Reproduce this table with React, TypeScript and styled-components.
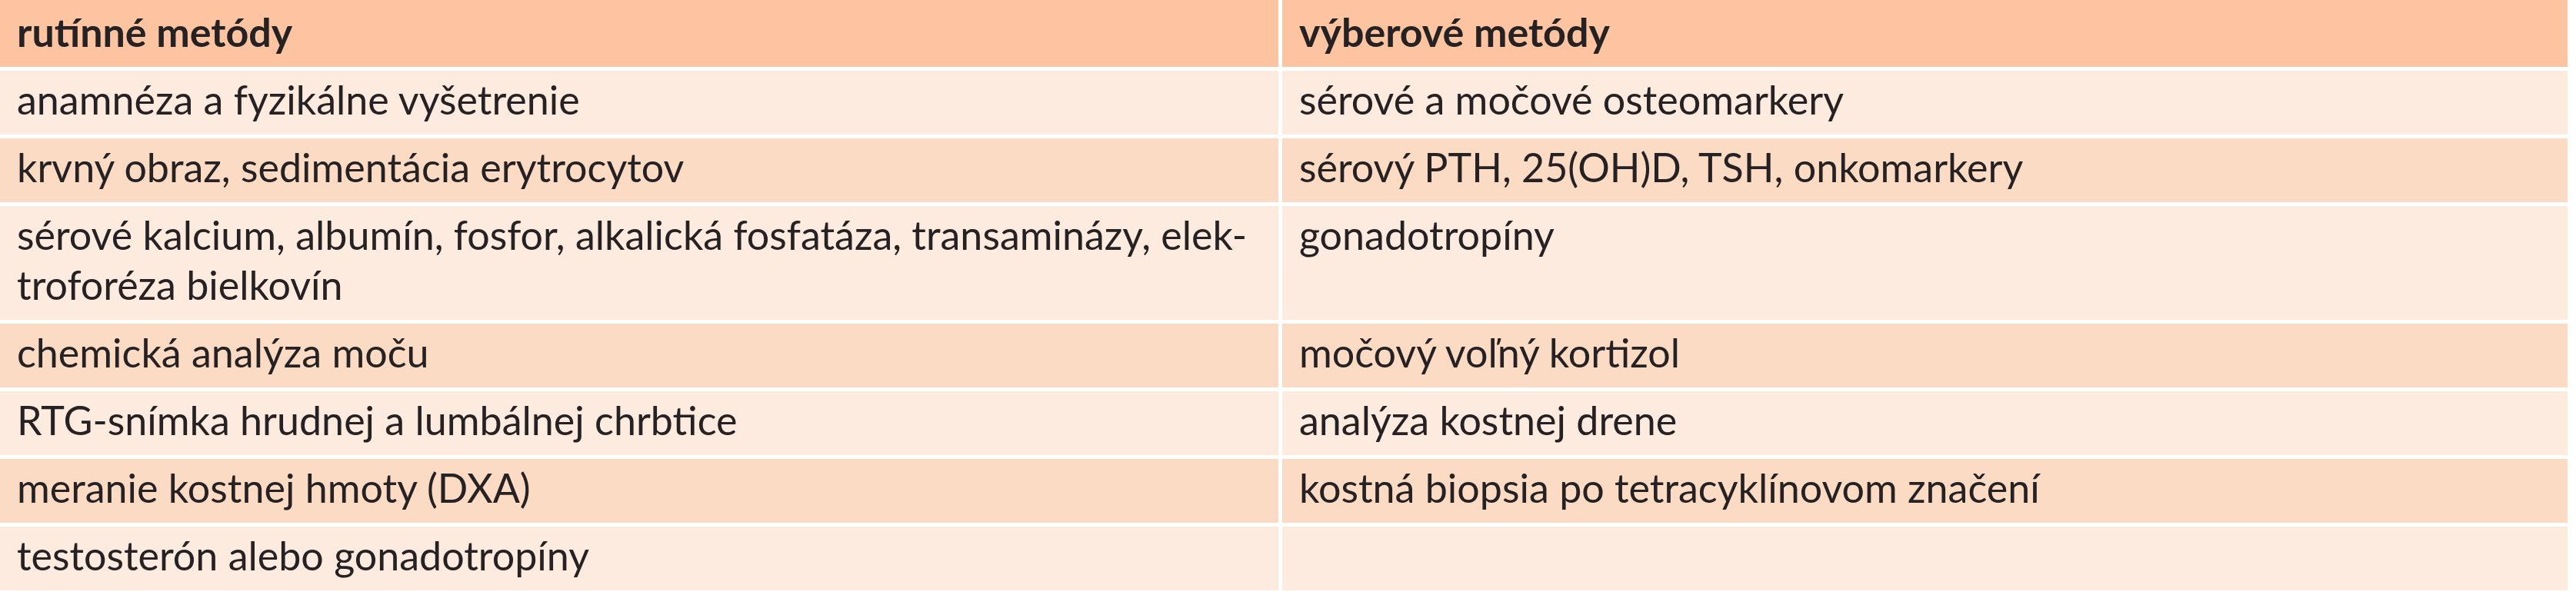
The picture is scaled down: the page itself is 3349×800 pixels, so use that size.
import { Fragment, ReactNode } from "react";
import styled, { createGlobalStyle } from "styled-components";

const GlobalStyle = createGlobalStyle`
  html, body {
    margin: 0;
    padding: 0;
    background: #ffffff;
  }
`;

const Table = styled.div`
  width: 3338px;
  display: grid;
  grid-template-columns: 1662px 1fr;
  column-gap: 5px;
  row-gap: 5px;
  font-family: Lato, "Liberation Sans", sans-serif;
  font-size: 52px;
  line-height: 65px;
  color: #262122;
`;

type Tone = "head" | "light" | "mid";

interface CellProps {
  tone: Tone;
}

const toneColor: Record<Tone, string> = {
  head: "#fcc4a1",
  light: "#fdebdf",
  mid: "#fcdbc5",
};

const Cell = styled.div<CellProps>`
  background: ${(props) => toneColor[props.tone]};
  padding: ${(props) =>
    props.tone === "head" ? "9px 22px 13px" : "5px 22px 13px"};
  font-weight: ${(props) => (props.tone === "head" ? 700 : 400)};
  min-height: 65px;
  white-space: nowrap;
`;

const rows: [ReactNode, string][] = [
  ["anamnéza a fyzikálne vyšetrenie", "sérové a močové osteomarkery"],
  ["krvný obraz, sedimentácia erytrocytov", "sérový PTH, 25(OH)D, TSH, onkomarkery"],
  [
    <>
      sérové kalcium, albumín, fosfor, alkalická fosfatáza, transaminázy, elek-
      <br />
      troforéza bielkovín
    </>,
    "gonadotropíny",
  ],
  ["chemická analýza moču", "močový voľný kortizol"],
  ["RTG-snímka hrudnej a lumbálnej chrbtice", "analýza kostnej drene"],
  ["meranie kostnej hmoty (DXA)", "kostná biopsia po tetracyklínovom značení"],
  ["testosterón alebo gonadotropíny", ""],
];

const App = () => {
  return (
    <>
      <GlobalStyle />
      <Table>
        <Cell tone="head">rutínné metódy</Cell>
        <Cell tone="head">výberové metódy</Cell>
        {rows.map(([left, right], index) => {
          const tone: Tone = index % 2 === 0 ? "light" : "mid";
          return (
            <Fragment key={index}>
              <Cell tone={tone}>{left}</Cell>
              <Cell tone={tone}>{right}</Cell>
            </Fragment>
          );
        })}
      </Table>
    </>
  );
};

export default App;
